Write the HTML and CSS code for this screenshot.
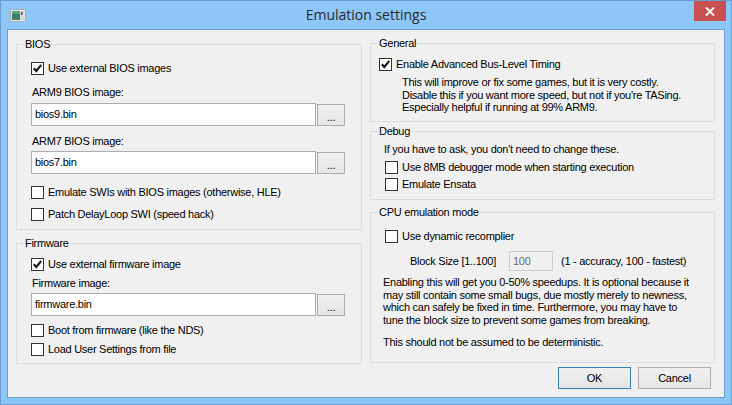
FILE: index.html
```html
<!DOCTYPE html>
<html>
<head>
<meta charset="utf-8">
<title>Emulation settings</title>
<link rel="stylesheet" href="styles.css">
</head>
<body>
<div class="window">
  <div class="titlebar">
    <svg class="app-icon" width="16" height="13" viewBox="0 0 16 13">
      <rect x="0.5" y="0.5" width="15" height="12" rx="1.5" fill="#e9e9e9" stroke="#a9a9a9"/>
      <rect x="2" y="2" width="8" height="9" fill="#3b7f6c"/>
      <rect x="2" y="2" width="8" height="3" fill="#5f9f8c"/>
      <rect x="10" y="2" width="4" height="9" fill="#d8d8d8"/>
      <rect x="11" y="3" width="1.5" height="3" fill="#4a5a5a"/>
    </svg>
    <div class="title">Emulation settings</div>
    <div class="close">
      <svg width="10" height="9" viewBox="0 0 10 9"><path d="M1 0.5 L9 8.5 M9 0.5 L1 8.5" stroke="#fff" stroke-width="2"/></svg>
    </div>
  </div>
  <div class="client">
    <div class="col">
      <fieldset class="group bios">
        <legend>BIOS</legend>
        <div class="body body-left">
          <div class="cb mt11"><span class="box checked"><svg width="11" height="11" viewBox="0 0 11 11"><path d="M1.8 5.2 L4.3 8 L9.2 1.8" fill="none" stroke="#1a1a1a" stroke-width="2.1"/></svg></span>Use external BIOS images</div>
          <div class="lbl mt11">ARM9 BIOS image:</div>
          <div class="filerow mt4"><div class="textbox">bios9.bin</div><div class="btn browse">...</div></div>
          <div class="lbl mt9">ARM7 BIOS image:</div>
          <div class="filerow mt3"><div class="textbox">bios7.bin</div><div class="btn browse">...</div></div>
          <div class="cb mt12"><span class="box"></span>Emulate SWIs with BIOS images (otherwise, HLE)</div>
          <div class="cb mt9"><span class="box"></span>Patch DelayLoop SWI (speed hack)</div>
        </div>
      </fieldset>
      <fieldset class="group firmware">
        <legend>Firmware</legend>
        <div class="body body-left fw">
          <div class="cb mt8"><span class="box checked"><svg width="11" height="11" viewBox="0 0 11 11"><path d="M1.8 5.2 L4.3 8 L9.2 1.8" fill="none" stroke="#1a1a1a" stroke-width="2.1"/></svg></span>Use external firmware image</div>
          <div class="lbl mt6">Firmware image:</div>
          <div class="filerow mt3"><div class="textbox">firmware.bin</div><div class="btn browse">...</div></div>
          <div class="cb mt8"><span class="box"></span>Boot from firmware (like the NDS)</div>
          <div class="cb mt6"><span class="box"></span>Load User Settings from file</div>
        </div>
      </fieldset>
    </div>
    <div class="col right">
      <fieldset class="group general">
        <legend>General</legend>
        <div class="body body-general">
          <div class="cb mt8"><span class="box checked"><svg width="11" height="11" viewBox="0 0 11 11"><path d="M1.8 5.2 L4.3 8 L9.2 1.8" fill="none" stroke="#1a1a1a" stroke-width="2.1"/></svg></span>Enable Advanced Bus-Level Timing</div>
          <div class="desc">This will improve or fix some games, but it is very costly.<br>Disable this if you want more speed, but not if you're TASing.<br>Especially helpful if running at 99% ARM9.</div>
        </div>
      </fieldset>
      <fieldset class="group debug">
        <legend>Debug</legend>
        <div class="body body-debug">
          <div class="lbl mt5 ask">If you have to ask, you don't need to change these.</div>
          <div class="cb mt5"><span class="box"></span>Use 8MB debugger mode when starting execution</div>
          <div class="cb mt4"><span class="box"></span>Emulate Ensata</div>
        </div>
      </fieldset>
      <fieldset class="group cpu">
        <legend>CPU emulation mode</legend>
        <div class="body body-cpu">
          <div class="cb mt11"><span class="box"></span>Use dynamic recomplier</div>
          <div class="blockrow mt8">
            <span class="blocklbl">Block Size [1..100]</span>
            <span class="numbox">100</span>
            <span class="blockhint">(1 - accuracy, 100 - fastest)</span>
          </div>
          <div class="para">Enabling this will get you 0-50% speedups. It is optional because it<br>may still contain some small bugs, due mostly merely to newness,<br>which can safely be fixed in time. Furthermore, you may have to<br>tune the block size to prevent some games from breaking.</div>
          <div class="para mt9">This should not be assumed to be deterministic.</div>
        </div>
      </fieldset>
      <div class="buttons">
        <div class="btn dlg default">OK</div>
        <div class="btn dlg">Cancel</div>
      </div>
    </div>
  </div>
</div>
</body>
</html>
```

FILE: styles.css
```css
html, body {
  margin: 0;
  padding: 0;
}
body {
  font-family: "Liberation Sans", Arial, sans-serif;
  font-size: 11px;
  letter-spacing: -0.27px;
  color: #000;
  background: #fff;
}
.window {
  width: 732px;
  height: 405px;
  box-sizing: border-box;
  border: 1px solid #6a9cd0;
  background: #8cc7f8;
  display: flex;
  flex-direction: column;
}
.titlebar {
  height: 28px;
  display: grid;
  grid-template-columns: 1fr auto 1fr;
  align-items: start;
}
.app-icon {
  margin: 8px 0 0 9px;
  display: block;
}
.title {
  font-family: "Open Sans", "Noto Sans", sans-serif;
  font-size: 14px;
  letter-spacing: 0;
  color: #2a2a2a;
  line-height: 20px;
  margin-top: 4px;
  white-space: nowrap;
}
.close {
  justify-self: end;
  width: 32px;
  height: 20px;
  margin-right: 5px;
  background: #c75050;
  display: flex;
  align-items: center;
  justify-content: center;
}
.close svg { display: block; }
.client {
  margin: 0 6px 6px;
  height: 369px;
  box-sizing: border-box;
  border: 1px solid #6a9cd0;
  background: #f0f0f0;
  padding: 8px 9px 0 8px;
  display: grid;
  grid-template-columns: 346px 345px;
  column-gap: 8px;
  align-content: start;
}
.col {
  display: flex;
  flex-direction: column;
}
.right { margin-top: -1px; }

fieldset.group {
  margin: 0;
  padding: 0;
  border: 1px solid #dcdcdc;
  min-width: 0;
  box-sizing: border-box;
}
legend {
  margin-left: 7px;
  padding: 0 1px;
  height: 13px;
  line-height: 13px;
}
fieldset.firmware { margin-top: 7px; }
fieldset.debug { margin-top: 3px; }
fieldset.cpu { margin-top: 6px; }

.body-left { padding: 0 16px 8px 14px; }
.body-left.fw { padding-bottom: 7px; }
.body-general { padding: 0 8px 7.5px 8px; }
.body-debug { padding: 0 8px 8px 14px; }
.body-cpu { padding: 0 8px 13.5px 14px; }

.mt3 { margin-top: 3px; }
.mt4 { margin-top: 4px; }
.mt5 { margin-top: 5px; }
.mt6 { margin-top: 6px; }
.mt8 { margin-top: 8px; }
.mt9 { margin-top: 9px; }
.mt11 { margin-top: 11px; }
.mt12 { margin-top: 12px; }

.cb {
  display: flex;
  align-items: center;
  height: 13px;
  line-height: 13px;
  white-space: nowrap;
}
.box {
  flex: none;
  width: 13px;
  height: 13px;
  box-sizing: border-box;
  border: 1px solid #333;
  background: #fff;
  margin-right: 4px;
  display: flex;
}
.box svg { display: block; }
.lbl {
  height: 13px;
  line-height: 13px;
  margin-left: 1px;
  white-space: nowrap;
}
.ask { margin-left: -1px; }
.filerow {
  display: flex;
  gap: 1px;
}
.textbox {
  width: 285px;
  height: 23px;
  box-sizing: border-box;
  border: 1px solid #abadb3;
  background: #fff;
  padding-left: 3px;
  line-height: 20px;
  white-space: nowrap;
}
.btn {
  box-sizing: border-box;
  border: 1px solid #acacac;
  background: linear-gradient(#f0f0f0, #e5e5e5);
  display: flex;
  align-items: center;
  justify-content: center;
  white-space: nowrap;
}
.browse {
  width: 28px;
  height: 22px;
  margin-top: 1px;
  line-height: 22px;
  padding-top: 3px;
}
.desc {
  margin: 5px 0 0 23px;
  line-height: 12.5px;
  white-space: nowrap;
}
.blockrow {
  display: flex;
  align-items: center;
  height: 20px;
  white-space: nowrap;
}
.blocklbl {
  width: 99px;
  margin-left: 25px;
  flex: none;
}
.numbox {
  width: 44px;
  height: 20px;
  box-sizing: border-box;
  border: 1px solid #cccccc;
  background: #f0f0f0;
  color: #6d6d6d;
  padding-left: 3px;
  line-height: 18px;
  flex: none;
}
.blockhint { margin-left: 8px; }
.para {
  margin: 5px 0 0 -2px;
  line-height: 12.7px;
  white-space: nowrap;
}
.para.mt9 { margin-top: 9px; }
.buttons {
  display: flex;
  justify-content: flex-end;
  gap: 7px;
  margin: 4px 4px 0 0;
}
.dlg {
  width: 73px;
  height: 22px;
}
.default { border-color: #3c7fb1; }
```
